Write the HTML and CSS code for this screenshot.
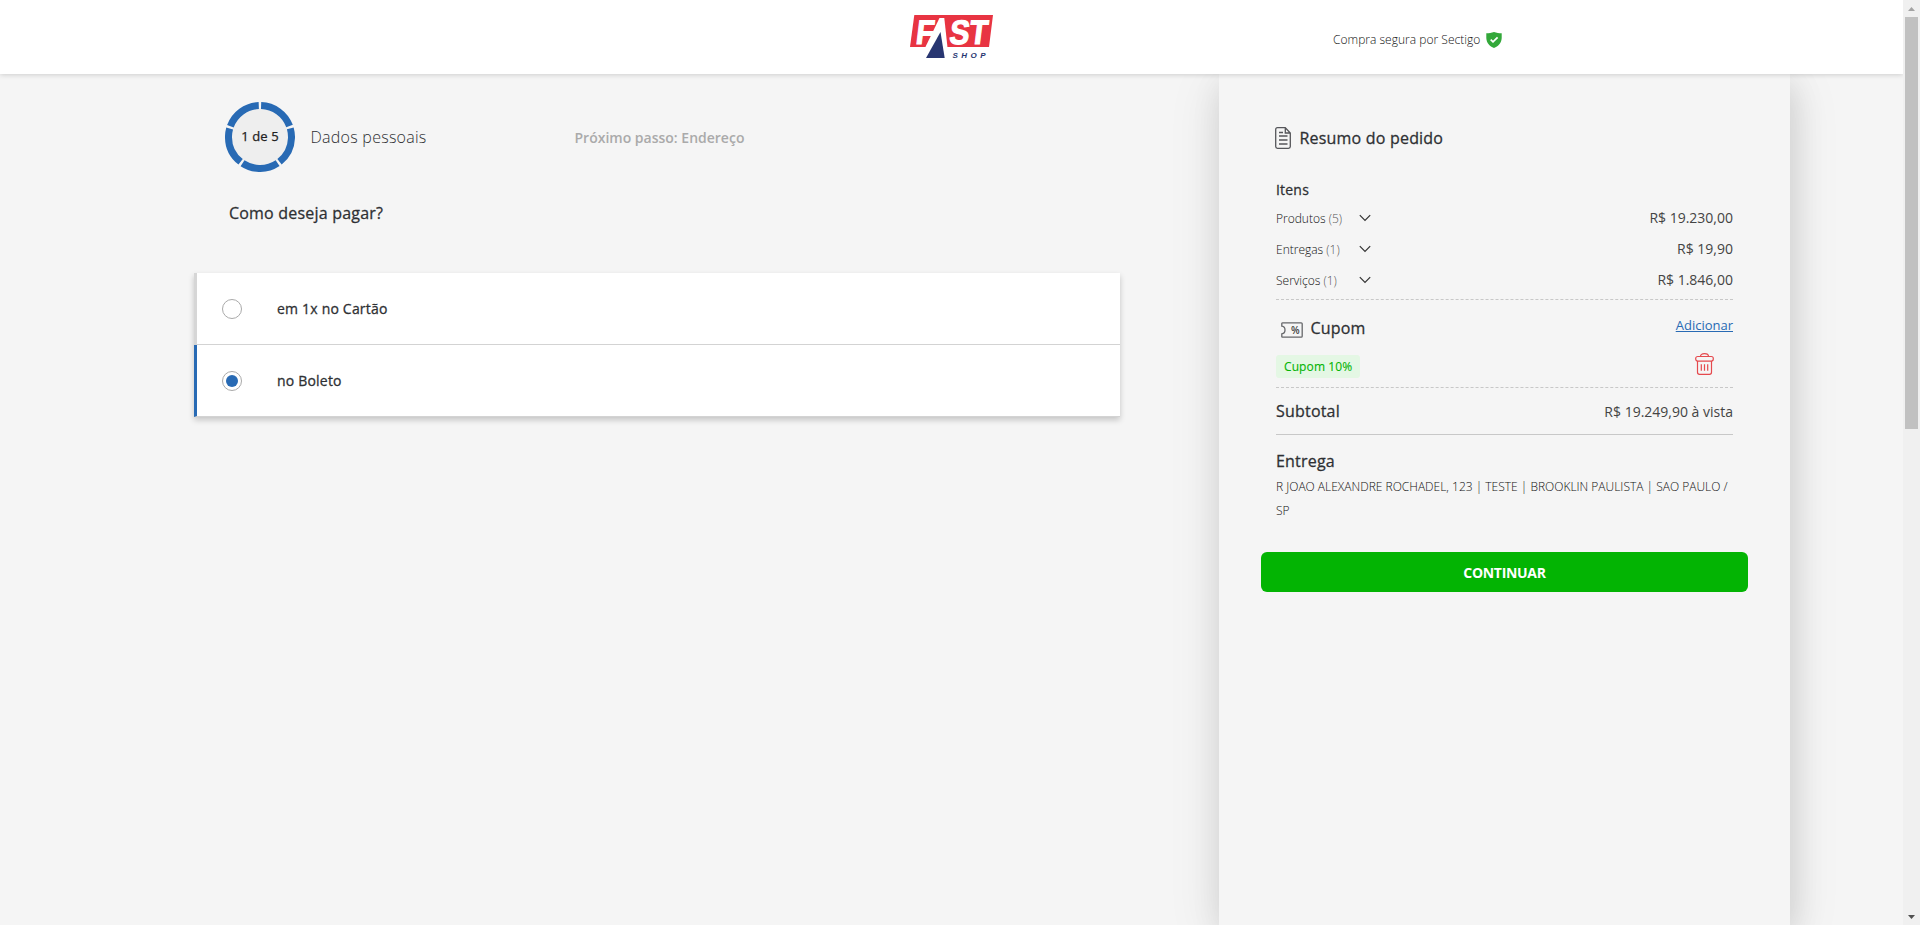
FILE: index.html
```html
<!DOCTYPE html>
<html lang="pt-BR">
<head>
<meta charset="utf-8">
<title>Fast Shop - Pagamento</title>
<link rel="stylesheet" href="styles.css">
</head>
<body>
<div class="viewport">
  <div class="page">
    <header class="header">
      <svg class="logo" viewBox="0 -15 84 74" width="84" height="74" role="img" aria-label="Fast Shop">
        <path d="M4.300 0H83L79 32H0Z" fill="#e83442"/>
        <path d="M29.500 3H34.300L37.500 32.500H15.200Z" fill="#fff"/>
        <path d="M30.500 17L34.700 43H16Z" fill="#283671"/>
        <g transform="translate(0 29) skewX(-7)">
          <text class="logo-word" x="5" y="0" textLength="18" lengthAdjust="spacingAndGlyphs">F</text>
          <text class="logo-word" x="38.500" y="0" textLength="38" lengthAdjust="spacingAndGlyphs">ST</text>
        </g>
        <text class="logo-shop" x="42.500" y="42.700" textLength="33">SHOP</text>
      </svg>
      <div class="secure">
        <span>Compra segura por Sectigo</span>
        <svg width="16" height="16" viewBox="0 0 16 16"><path d="M8 0C5.500 1 3 1.200.3 1.300V6C.5 11 3.800 14.500 8 16c4.200-1.500 7.500-5 7.700-10V1.300C13 1.200 10.500 1 8 0Z" fill="#33a83a"/><path d="M4.700 7.700 7 9.900l4.600-4.600" fill="none" stroke="#fff" stroke-width="1.700"/></svg>
      </div>
    </header>
    <div class="content">
      <main class="main">
        <div class="steps">
          <svg class="ring" width="70" height="70" viewBox="0 0 70 70">
            <circle cx="35" cy="35" r="29" fill="#eee"/>
            <circle class="ring-arc" cx="35" cy="35" r="31.500" pathLength="100" transform="rotate(-88 35 35)"/>
            <text class="ring-text" x="35" y="39" text-anchor="middle">1 de 5</text>
          </svg>
          <span class="step-name">Dados pessoais</span>
          <span class="step-next">Próximo passo: Endereço</span>
        </div>
        <h1 class="question">Como deseja pagar?</h1>
        <div class="options">
          <label class="option"><span class="radio"></span><span>em 1x no Cartão</span></label>
          <label class="option option-on"><span class="radio"></span><span>no Boleto</span></label>
        </div>
      </main>
      <aside class="summary">
        <div class="summary-title">
          <svg width="16" height="22" viewBox="0 0 16 22" fill="none" stroke="#55565a" stroke-width="1.300"><path d="M10 .7H2.500Q.7.700.7 2.500v17q0 1.800 1.800 1.800h11q1.800 0 1.800-1.800V6L10.300.7V6h5"/><path d="M4 5.500h4M4 9h8.500M4 13h8.500M4 17h8.500"/></svg>
          <h2>Resumo do pedido</h2>
        </div>
        <h3 class="items-title">Itens</h3>
        <div class="item"><span class="item-name">Produtos <i>(5)</i></span><svg class="chevron" viewBox="0 0 12 8"><path d="M.8 1.200 6 6.500l5.200-5.300"/></svg><span class="price">R$ 19.230,00</span></div>
        <div class="item"><span class="item-name">Entregas <i>(1)</i></span><svg class="chevron" viewBox="0 0 12 8"><path d="M.8 1.200 6 6.500l5.200-5.300"/></svg><span class="price">R$ 19,90</span></div>
        <div class="item"><span class="item-name">Serviços <i>(1)</i></span><svg class="chevron" viewBox="0 0 12 8"><path d="M.8 1.200 6 6.500l5.200-5.300"/></svg><span class="price">R$ 1.846,00</span></div>
        <section class="coupon">
          <div class="coupon-head">
            <svg width="22" height="16" viewBox="0 0 22 16"><path d="M1.500.8h18.700q1 0 1 1v12.400q0 1-1 1H1.500Q.7 15.200.8 14.200v-2.400Q4 11.500 4 8T.8 4.200V1.800Q.7.800 1.500.8Z" fill="none" stroke="#66676a" stroke-width="1.300"/><text class="percent" x="10" y="12">%</text></svg>
            <h2>Cupom</h2>
            <a class="add">Adicionar</a>
          </div>
          <div class="coupon-row">
            <span class="tag">Cupom 10%</span>
            <svg class="trash" width="19" height="22" viewBox="0 0 19 22"><path d="M5.500 3.500Q5.500.700 9.500.7t4 2.800"/><rect x=".7" y="3.500" width="17.600" height="4.600" rx="2"/><path d="M2.500 8.100v11.200q0 2 2 2h10q2 0 2-2V8.100M6.300 11.300v6.500M9.500 11.300v6.500M12.700 11.300v6.500"/></svg>
          </div>
        </section>
        <div class="subtotal"><h2>Subtotal</h2><span class="price">R$ 19.249,90 à vista</span></div>
        <section class="delivery">
          <h2>Entrega</h2>
          <p>R JOAO ALEXANDRE ROCHADEL, 123 | TESTE | BROOKLIN PAULISTA | SAO PAULO /<br>SP</p>
        </section>
        <button class="continue">CONTINUAR</button>
      </aside>
    </div>
  </div>
  <div class="scrollbar">
    <svg width="17" height="17" viewBox="0 0 17 17"><path d="M5 11 8.500 7l3.500 4Z" fill="#a3a3a3"/></svg>
    <div class="thumb"></div>
    <svg width="17" height="17" viewBox="0 0 17 17"><path d="M5 7h7l-3.500 4Z" fill="#505050"/></svg>
  </div>
</div>
</body>
</html>
```
FILE: styles.css
```css
* { box-sizing: border-box; }
body { margin: 0; background: #f5f5f5; color: #2e3033; font-family: "Open Sans", sans-serif; }
h1, h2, h3, p { margin: 0; }
.viewport { display: flex; height: 925px; overflow: hidden; }
.page { flex: 1; display: flex; flex-direction: column; overflow: hidden; }
.header { position: relative; z-index: 1; height: 74px; flex: none; display: flex; align-items: flex-start; background: #fff; box-shadow: 0 1px 5px rgba(0, 0, 0, .16); padding-left: 910px; }
.logo { flex: none; overflow: visible; }
.logo-word { font: 700 34px "Liberation Sans", sans-serif; fill: #fff; stroke: #fff; stroke-width: 1.2px; }
.logo-shop { font: italic 700 8px "Liberation Sans", sans-serif; fill: #283671; }
.secure { display: flex; align-items: center; gap: 6px; margin: 32px 0 0 339px; height: 16px; font-size: 12px; font-weight: 300; color: #111; white-space: nowrap; }
.secure span { margin-top: -2px; letter-spacing: .02px; }
.content { display: flex; flex: 1; padding-left: 194px; }
.main { width: 926px; margin-right: 99px; }
.steps { display: flex; align-items: center; height: 70px; margin: 28px 0 0 31px; }
.ring-arc { fill: none; stroke: #286ab4; stroke-width: 7; stroke-dasharray: 18.800 1.200; }
.ring-text { font-size: 13px; fill: #222; stroke: #222; stroke-width: .25px; letter-spacing: .1px; }
.step-name { width: 264px; margin-left: 15.5px; font-size: 16px; font-weight: 300; letter-spacing: .26px; }
.step-next { font-size: 14px; font-weight: 600; color: #aaa; }
.question, .items-title, .option, .summary h2, .tag { font-weight: 400; -webkit-text-stroke: .28px currentColor; letter-spacing: .2px; }
.question { margin: 30px 0 0 35px; font-size: 16px; line-height: 22px; }
.options { margin-top: 49px; box-shadow: 0 3px 6px rgba(0, 0, 0, .2); }
.option { display: flex; align-items: center; height: 72px; padding-left: 25px; background: #fff; border-left: 3px solid #d6d6d6; border-bottom: 1px solid #d3d3d3; font-size: 14px; }
.option-on { border-left-color: #286ab4; }
.radio { display: flex; width: 20px; height: 20px; margin-right: 35px; border: 1px solid #aaa; border-radius: 50%; }
.option-on .radio::after { content: ""; width: 12px; height: 12px; margin: 3px; border-radius: 50%; background: #286ab4; }
.summary { width: 571px; padding: 53px 57px 0; box-shadow: 0 10px 50px rgba(0, 0, 0, .1), 4px 10px 30px rgba(0, 0, 0, .1); }
.summary h2 { font-size: 16px; line-height: 22px; }
.summary-title { display: flex; gap: 8.5px; margin-left: -1px; height: 22px; }
.items-title { margin-top: 31px; font-size: 14px; line-height: 20px; }
.item { display: flex; align-items: center; height: 31px; }
.items-title + .item { margin-top: 2px; }
.item-name { width: 83px; padding-top: 1px; font-size: 12px; font-weight: 300; color: #111; }
.item-name i { font-style: normal; color: #555; }
.chevron { width: 12px; height: 8px; fill: none; stroke: #333; stroke-width: 1.2; }
.price { margin-left: auto; font-size: 14px; font-weight: 400; color: #444; }
.coupon { height: 89px; margin-top: 4px; border-top: 1px dashed #c8c8c8; border-bottom: 1px dashed #c8c8c8; padding-top: 17px; }
.coupon-head { display: flex; gap: 7.5px; padding-left: 5px; height: 22px; }
.coupon-head svg { margin-top: 5px; }
.percent { font-size: 10px; font-weight: 600; fill: #444; }
.add { margin: -1px 0 0 auto; font-size: 13px; line-height: 18px; color: #286ab4; text-decoration: underline; }
.coupon-row { display: flex; align-items: center; justify-content: space-between; height: 23px; margin-top: 16px; }
.summary .tag { padding: 0 8px; border-radius: 3px; background: #e4f7e4; color: #03b403; font-size: 12px; line-height: 23px; -webkit-text-stroke-width: .1px; letter-spacing: .1px; }
.trash { margin: -6px 19px 0 0; fill: none; stroke: #e5494d; stroke-width: 1.2; }
.subtotal { display: flex; align-items: center; height: 47px; border-bottom: 1px solid #c8c8c8; }
.delivery { padding-top: 15px; }
.delivery p { margin-top: 3px; font-size: 12px; line-height: 24px; font-weight: 300; color: #111; white-space: nowrap; }
.continue { display: block; width: 487px; height: 40px; margin: 29px 0 0 -15px; padding: 0; border: 0; border-radius: 6px; background: #03b403; color: #fff; font: 700 14px "Open Sans", sans-serif; letter-spacing: -.3px; }
.scrollbar { width: 17px; display: flex; flex-direction: column; align-items: center; background: #f0f0f0; }
.thumb { width: 13px; height: 412px; margin-bottom: auto; background: #c1c1c1; }
```
